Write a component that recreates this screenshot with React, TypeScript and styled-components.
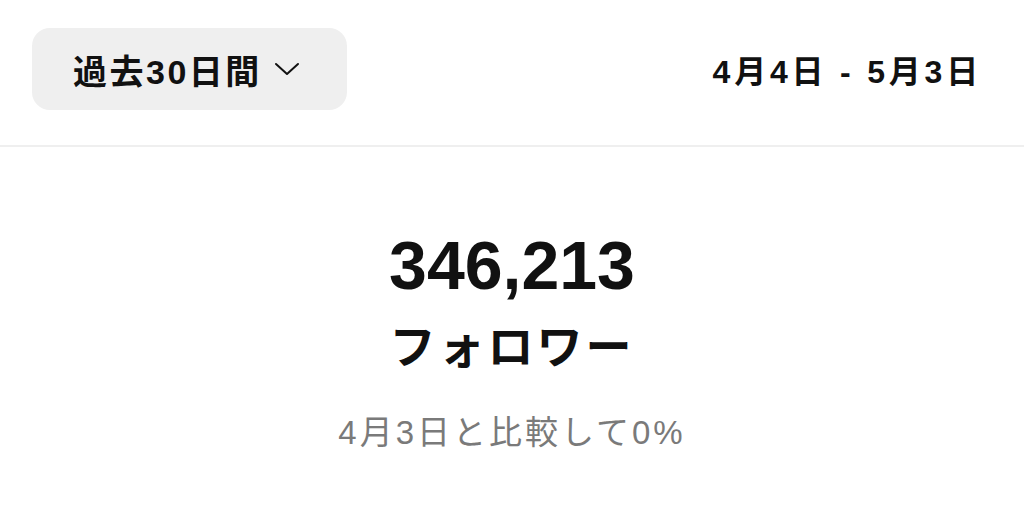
import React from "react";
import styled, { createGlobalStyle } from "styled-components";

const Global = createGlobalStyle`
  html, body { margin: 0; padding: 0; background: #ffffff; }
  body { font-family: "Liberation Sans", "Noto Sans CJK JP", sans-serif; color: #111; }
`;

const Page = styled.div`
  width: 1024px;
  height: 524px;
  display: flex;
  flex-direction: column;
  background: #fff;
  overflow: hidden;
`;

const Header = styled.header`
  height: 147px;
  box-sizing: border-box;
  padding: 28px 42px 0 32px;
  display: flex;
  justify-content: space-between;
  align-items: flex-start;
  border-bottom: 2px solid #efefef;
`;

const RangeButton = styled.button`
  width: 315px;
  height: 82px;
  border: none;
  border-radius: 18px;
  background: #efefef;
  display: flex;
  align-items: center;
  gap: 12px;
  padding: 0 0 0 41px;
  font-family: inherit;
  font-size: 34px;
  font-weight: 700;
  color: #111;
  letter-spacing: 2.5px;
`;

const DateRange = styled.div`
  height: 82px;
  display: flex;
  align-items: center;
  font-size: 32px;
  font-weight: 700;
  color: #111;
  letter-spacing: 3.8px;
`;

const Summary = styled.main`
  display: flex;
  flex-direction: column;
  align-items: center;
  padding-top: 78px;
`;

const Count = styled.div`
  font-size: 68px;
  font-weight: 700;
  line-height: 80px;
  color: #111;
`;

const Label = styled.div`
  margin-top: 14px;
  font-size: 46px;
  font-weight: 700;
  line-height: 56px;
  letter-spacing: 3px;
  color: #111;
`;

const Compare = styled.div`
  margin-top: 38px;
  font-size: 33px;
  line-height: 40px;
  color: #7a7a7a;
  letter-spacing: 3px;
`;

const Chevron = () => (
  <svg width="26" height="16" viewBox="0 0 26 16" fill="none">
    <path d="M2 3 L13 13 L24 3" stroke="#111" strokeWidth="2" strokeLinecap="round" strokeLinejoin="round" />
  </svg>
);

export default function App() {
  return (
    <Page>
      <Global />
      <Header>
        <RangeButton>
          過去30日間
          <Chevron />
        </RangeButton>
        <DateRange>4月4日 - 5月3日</DateRange>
      </Header>
      <Summary>
        <Count>346,213</Count>
        <Label>フォロワー</Label>
        <Compare>4月3日と比較して0%</Compare>
      </Summary>
    </Page>
  );
}
